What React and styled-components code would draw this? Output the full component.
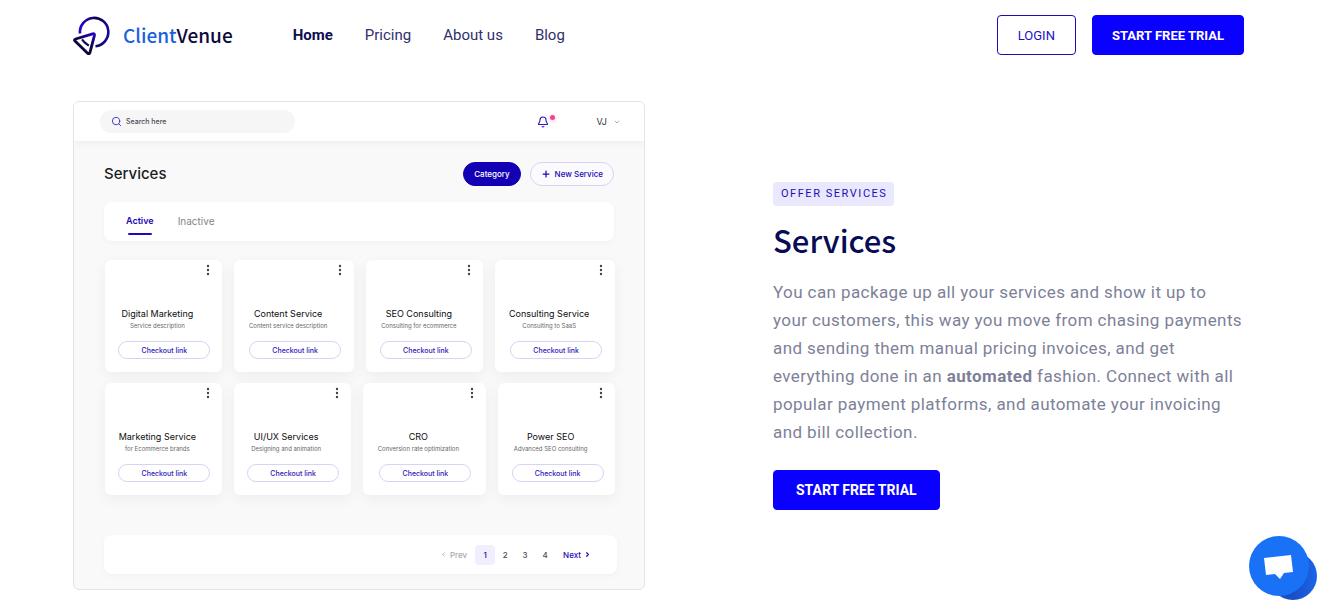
import React, { useState } from "react";
import styled, { createGlobalStyle } from "styled-components";
import { Bell, ChevronDown, ChevronLeft, ChevronRight, Plus, Search } from "lucide-react";

const GlobalStyle = createGlobalStyle`
  * {
    box-sizing: border-box;
  }

  body {
    margin: 0;
    background: #fff;
    font-family: Roboto, "Liberation Sans", sans-serif;
  }

  button,
  input {
    font-family: inherit;
    margin: 0;
  }

  button {
    cursor: pointer;
  }
`;

const Page = styled.div`
  padding: 0 88px 0 73px;
`;

const Header = styled.header`
  display: flex;
  align-items: center;
  height: 70px;
`;

const Brand = styled.a`
  display: flex;
  align-items: center;
  gap: 12px;
  margin-right: 60px;
  color: #0b0b3b;
  font: 500 19px/28px "Noto Sans CJK SC", sans-serif;
  text-decoration: none;
`;

const BrandAccent = styled.span`
  color: #1a5fe0;
`;

const Nav = styled.nav`
  display: flex;
  gap: 32px;
  flex: 1;
`;

const NavLink = styled.a`
  color: ${p => (p.$active ? "#0d0d55" : "#2f2f6e")};
  font-size: 15px;
  line-height: 24px;
  font-weight: ${p => (p.$active ? 700 : 400)};
  text-decoration: none;
`;

const Actions = styled.div`
  display: flex;
  gap: 16px;
`;

const ActionButton = styled.button`
  height: 40px;
  padding: 0 ${p => (p.$large ? 22 : p.$outline ? 20 : 19)}px;
  border: 1px solid ${p => (p.$outline ? "#1a0db4" : "#0a00ff")};
  border-radius: 4px;
  background: ${p => (p.$outline ? "#fff" : "#0a00ff")};
  color: ${p => (p.$outline ? "#1d0fc8" : "#fff")};
  font-size: ${p => (p.$large ? 14 : 13)}px;
  font-weight: ${p => (p.$outline ? 400 : 700)};
  white-space: nowrap;
`;

const Hero = styled.main`
  display: grid;
  grid-template-columns: minmax(0, 572fr) minmax(0, 471fr);
  align-items: center;
  gap: 128px;
  margin-top: 31px;
`;

const Panel = styled.section`
  overflow: hidden;
  border: 1px solid #e3e3e5;
  border-radius: 6px;
  background: #f9f9f9;
  color: #1c1c1e;
  font-family: Inter, sans-serif;
`;

const TopBar = styled.div`
  display: flex;
  align-items: center;
  height: 39px;
  padding: 0 23px 0 26px;
  background: #fff;
  box-shadow: 0 2px 8px rgba(0, 0, 0, 0.05);
`;

const SearchBox = styled.label`
  display: flex;
  align-items: center;
  gap: 4px;
  width: 195px;
  height: 23px;
  padding: 0 11px;
  border-radius: 12px;
  background: #f6f6f7;
  color: #3d2cc4;

  input {
    min-width: 0;
    flex: 1;
    padding: 0;
    border: 0;
    outline: 0;
    background: none;
    font-size: 7px;
    font-weight: 500;
  }

  input::placeholder {
    color: #4a4a52;
    opacity: 1;
  }
`;

const BellButton = styled.button`
  position: relative;
  display: flex;
  margin-left: auto;
  padding: 0;
  border: 0;
  background: none;
  color: #2a14c0;
`;

const BellDot = styled.span`
  position: absolute;
  top: -1px;
  right: -6px;
  width: 5px;
  height: 5px;
  border-radius: 50%;
  background: #f0468c;
  box-shadow: 0 1px 4px rgba(240, 70, 140, 0.4);
`;

const UserButton = styled.button`
  display: flex;
  align-items: center;
  gap: 6px;
  margin-left: 48px;
  padding: 0;
  border: 0;
  background: none;
  color: #333;
  font-size: 9px;

  svg {
    color: #8a8a90;
  }
`;

const PanelBody = styled.div`
  padding: 21px 30px 15px;
`;

const TitleRow = styled.div`
  display: flex;
  align-items: center;
  gap: 9px;

  h2 {
    flex: 1;
    margin: 0;
    font-size: 15px;
    line-height: 20px;
    font-weight: 500;
  }
`;

const Pill = styled.button`
  display: flex;
  align-items: center;
  justify-content: center;
  gap: 4px;
  height: 24px;
  padding: 0 10px;
  border: 1px solid ${p => (p.$filled ? "#1400b4" : "#d8d3f5")};
  border-radius: 12px;
  background: ${p => (p.$filled ? "#1400b4" : "#fbfbfd")};
  color: ${p => (p.$filled ? "#fff" : "#2408b4")};
  font-size: 8px;
  font-weight: 500;
`;

const Strip = styled.div`
  display: flex;
  align-items: center;
  height: 39px;
  border-radius: 8px;
  background: #fff;
  box-shadow: 0 2px 6px rgba(0, 0, 0, 0.03);
`;

const Tabs = styled(Strip)`
  gap: 24px;
  margin-top: 16px;
  padding: 0 22px;
`;

const Tab = styled.button`
  position: relative;
  height: 100%;
  padding: 0 0 2px;
  border: 0;
  background: none;
  color: ${p => (p.$active ? "#2408b4" : "#84848a")};
  font-size: ${p => (p.$active ? 9 : 10)}px;
  font-weight: ${p => (p.$active ? 600 : 400)};

  &::after {
    content: "";
    position: absolute;
    right: 2px;
    bottom: 6px;
    left: 2px;
    height: 2px;
    border-radius: 1px;
    background: ${p => (p.$active ? "#2408b4" : "transparent")};
  }
`;

const CardGrid = styled.div`
  display: grid;
  gap: 11px;
  margin: 19px -1px 0 1px;
`;

const CardRow = styled.div`
  display: grid;
  grid-template-columns: ${p => p.$columns};
  gap: 12px;
`;

const Card = styled.article`
  display: flex;
  flex-direction: column;
  align-items: center;
  min-width: 0;
  height: 112px;
  padding: 4px 10px 13px 12px;
  border-radius: 6px;
  background: #fff;
  box-shadow: 0 4px 14px rgba(0, 0, 0, 0.05);
  white-space: nowrap;

  h3,
  p {
    margin: 0;
    padding-right: 14px;
    font-weight: 400;
  }

  h3 {
    margin-top: 31px;
    color: #0c0c0e;
    font-size: 9px;
    line-height: 14px;
  }

  p {
    color: #66666c;
    font-size: 6px;
    line-height: 10px;
  }
`;

const MenuButton = styled.button`
  display: flex;
  align-self: flex-end;
  padding: 0;
  border: 0;
  background: none;
  color: #444;
`;

const CheckoutButton = styled.button`
  width: 92px;
  height: 18px;
  margin-top: auto;
  padding: 0;
  border: 1px solid #d8d3f5;
  border-radius: 9px;
  background: #fff;
  color: #2e14b8;
  font-size: 7px;
  font-weight: 500;
`;

const Pagination = styled(Strip).attrs({ as: "nav" })`
  justify-content: flex-end;
  margin-top: 40px;
  margin-right: -3px;
  padding-right: 18px;
`;

const PageButton = styled.button`
  min-width: 20px;
  height: 20px;
  padding: 0;
  border: 0;
  border-radius: 4px;
  background: ${p => (p.$active ? "#f1effd" : "none")};
  color: ${p => (p.$active ? "#2408b4" : "#4a4a50")};
  font-size: 8px;
  font-weight: 500;
`;

const StepButton = styled(PageButton)`
  display: flex;
  align-items: center;
  gap: 3px;
  margin: 0 8px;
  color: ${p => (p.disabled ? "#a9a9ae" : "#2408b4")};
`;

const Copy = styled.section`
  display: flex;
  flex-direction: column;
  align-items: flex-start;

  h1 {
    margin: 14px 0 18px;
    color: #080c56;
    font: 500 31px/40px "Noto Sans CJK SC", sans-serif;
  }

  p {
    margin: 0 0 24px;
    color: #7d8198;
    font-size: 17px;
    line-height: 28px;
    letter-spacing: 0.024em;
  }
`;

const Tag = styled.span`
  padding: 0 7px 0 8px;
  border-radius: 4px;
  background: #eae8fd;
  color: #1c0cc0;
  font-size: 11px;
  line-height: 24px;
  letter-spacing: 0.14em;
`;

const ChatButton = styled.button`
  position: fixed;
  right: 11px;
  bottom: 5px;
  display: flex;
  padding: 0;
  border: 0;
  background: none;
`;

const cardRows = [
  {
    columns: "117fr 121fr 117fr 120fr",
    cards: [
      ["Digital Marketing", "Service description"],
      ["Content Service", "Content service description"],
      ["SEO Consulting", "Consulting for ecommerce"],
      ["Consulting Service", "Consulting to SaaS"]
    ]
  },
  {
    columns: "117fr 117fr 124fr 117fr",
    cards: [
      ["Marketing Service", "for Ecommerce brands"],
      ["UI/UX Services", "Designing and animation"],
      ["CRO", "Conversion rate optimization"],
      ["Power SEO", "Advanced SEO consulting"]
    ]
  }
];

const Logo = () => (
  <svg width="38" height="40" viewBox="0 -1 38 40" fill="none" aria-hidden="true">
    <defs>
      <linearGradient id="ring" x1="6" y1="16" x2="37" y2="20" gradientUnits="userSpaceOnUse">
        <stop stopColor="#2a00d8" />
        <stop offset="0.5" stopColor="#0a0650" />
        <stop offset="1" stopColor="#1a08a8" />
      </linearGradient>
      <linearGradient id="arrow" x1="22" y1="16" x2="8" y2="36" gradientUnits="userSpaceOnUse">
        <stop stopColor="#2a00d8" />
        <stop offset="0.6" stopColor="#0a0640" />
      </linearGradient>
    </defs>
    <path
      d="M7 17.5A14.2 14.2 0 1 1 22.5 30.2"
      stroke="url(#ring)"
      strokeWidth="2.6"
    />
    <path
      d="M19.6 17.8 2.6 23Q.8 23.6 2 25L14.6 37.2Q16.2 38.7 16.9 36.6L21.4 19.6Q21.8 17.2 19.6 17.8Z"
      stroke="url(#arrow)"
      strokeWidth="2.8"
      strokeLinejoin="round"
    />
    <path d="M9 23.4 11.6 26.4 15.8 29.6" stroke="#100858" strokeWidth="2.2" />
  </svg>
);

const Dots = () => (
  <svg width="8" height="12" viewBox="0 0 8 12" fill="currentColor" aria-hidden="true">
    <circle cx="4" cy="2" r="1.2" />
    <circle cx="4" cy="6" r="1.2" />
    <circle cx="4" cy="10" r="1.2" />
  </svg>
);

const ServiceCard = ({ title, description }) => (
  <Card>
    <MenuButton aria-label={`${title} options`}>
      <Dots />
    </MenuButton>
    <h3>{title}</h3>
    <p>{description}</p>
    <CheckoutButton>Checkout link</CheckoutButton>
  </Card>
);

const ServicesPanel = () => {
  const [tab, setTab] = useState("Active");
  const [page, setPage] = useState(1);

  return (
    <Panel>
      <TopBar>
        <SearchBox>
          <Search size={11} strokeWidth={2} />
          <input type="text" placeholder="Search here" aria-label="Search here" />
        </SearchBox>
        <BellButton aria-label="Notifications">
          <Bell size={12} strokeWidth={2.2} />
          <BellDot />
        </BellButton>
        <UserButton>
          VJ
          <ChevronDown size={8} />
        </UserButton>
      </TopBar>
      <PanelBody>
        <TitleRow>
          <h2>Services</h2>
          <Pill $filled>Category</Pill>
          <Pill>
            <Plus size={10} strokeWidth={3} />
            New Service
          </Pill>
        </TitleRow>
        <Tabs>
          {["Active", "Inactive"].map(name => (
            <Tab key={name} $active={tab === name} onClick={() => setTab(name)}>
              {name}
            </Tab>
          ))}
        </Tabs>
        <CardGrid>
          {cardRows.map((row, i) => (
            <CardRow key={i} $columns={row.columns}>
              {row.cards.map(([title, description]) => (
                <ServiceCard key={title} title={title} description={description} />
              ))}
            </CardRow>
          ))}
        </CardGrid>
        <Pagination>
          <StepButton disabled={page === 1} onClick={() => setPage(page - 1)}>
            <ChevronLeft size={7} strokeWidth={3} />
            Prev
          </StepButton>
          {[1, 2, 3, 4].map(n => (
            <PageButton key={n} $active={page === n} onClick={() => setPage(n)}>
              {n}
            </PageButton>
          ))}
          <StepButton disabled={page === 4} onClick={() => setPage(page + 1)}>
            Next
            <ChevronRight size={7} strokeWidth={4} />
          </StepButton>
        </Pagination>
      </PanelBody>
    </Panel>
  );
};

const App = () => (
  <Page>
    <GlobalStyle />
    <Header>
      <Brand href="#">
        <Logo />
        <span>
          <BrandAccent>Client</BrandAccent>Venue
        </span>
      </Brand>
      <Nav>
        <NavLink href="#" $active>
          Home
        </NavLink>
        <NavLink href="#pricing">Pricing</NavLink>
        <NavLink href="#about">About us</NavLink>
        <NavLink href="#blog">Blog</NavLink>
      </Nav>
      <Actions>
        <ActionButton $outline>LOGIN</ActionButton>
        <ActionButton>START FREE TRIAL</ActionButton>
      </Actions>
    </Header>
    <Hero>
      <ServicesPanel />
      <Copy>
        <Tag>OFFER SERVICES</Tag>
        <h1>Services</h1>
        <p>
          You can package up all your services and show it up to your customers,
          this way you move from chasing payments and sending them manual pricing
          invoices, and get everything done in an <strong>automated</strong>{" "}
          fashion. Connect with all popular payment platforms, and automate your
          invoicing and bill collection.
        </p>
        <ActionButton $large>START FREE TRIAL</ActionButton>
      </Copy>
    </Hero>
    <ChatButton aria-label="Open chat">
      <svg width="72" height="72" viewBox="0 0 72 72">
        <defs>
          <linearGradient id="chat" x1="0" y1="0" x2="1" y2="0">
            <stop offset="0.5" stopColor="#1a4fc8" />
            <stop offset="1" stopColor="#1d63e8" />
          </linearGradient>
        </defs>
        <circle cx="44" cy="44" r="24" fill="url(#chat)" />
        <circle cx="30" cy="34" r="30" fill="#1972f5" />
        <path d="M15 26 42 23 44 40 35 41 31 47 26 42 17 43Z" fill="#fff" />
      </svg>
    </ChatButton>
  </Page>
);

export default App;
